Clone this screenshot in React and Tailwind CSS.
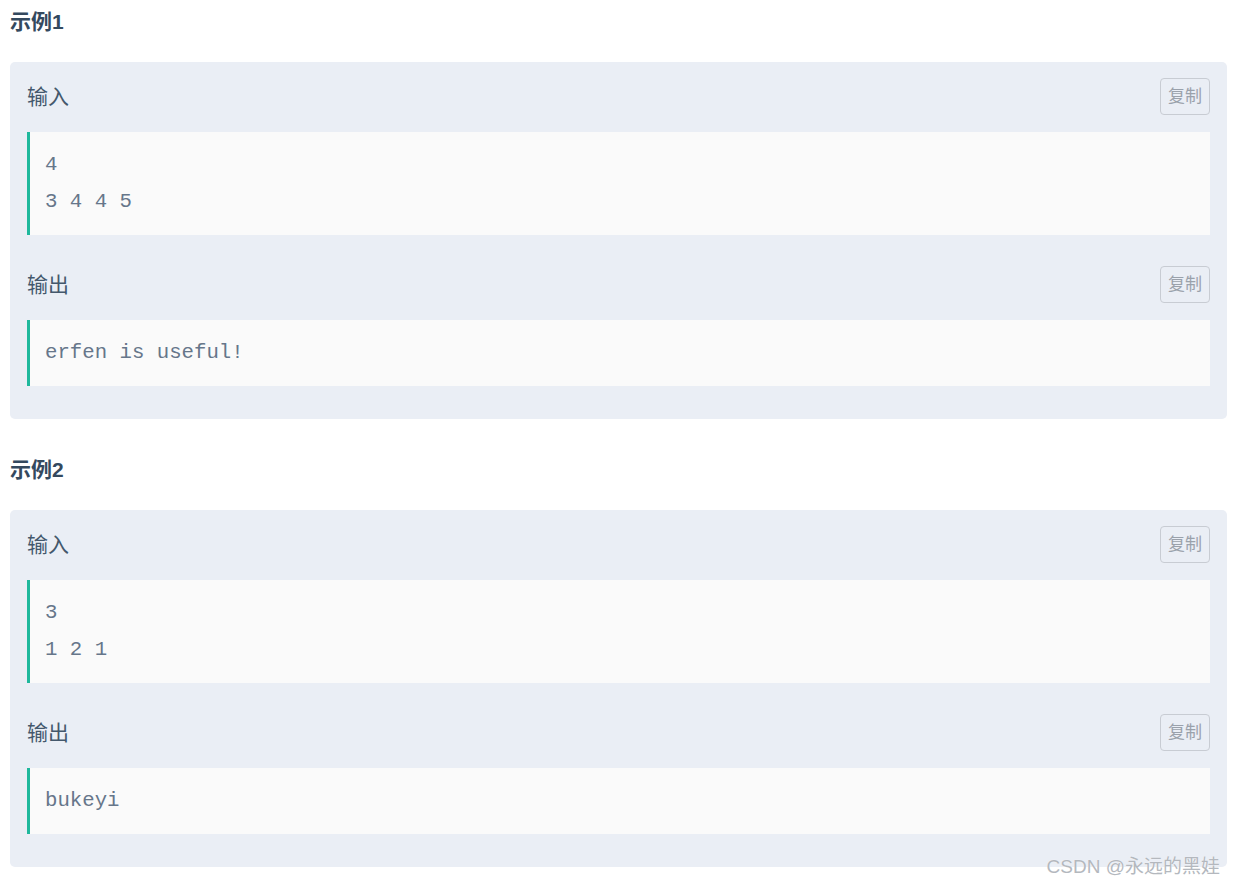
import React from 'react';

const samples = [
    { title: '示例1', input: ['4', '3 4 4 5'], output: ['erfen is useful!'] },
    { title: '示例2', input: ['3', '1 2 1'], output: ['bukeyi'] },
];

const IOBlock = ({ label, lines }) => (
    <div>
        <div className="flex items-center justify-between h-[37px]">
            <span className="text-[21px] text-[#44586c]">{label}</span>
            <button className="w-[50px] h-[37px] rounded-[4px] border border-[#c8ccd3] text-[17px] text-[#9aa1ab] bg-transparent">
                复制
            </button>
        </div>
        <div className="mt-[17px] border-l-[3px] border-[#1fb89c] bg-[#fafafa] pt-[14px] pb-[15px] pl-[15px]">
            {lines.map((line, i) => (
                <div
                    key={i}
                    className="h-[37px] leading-[37px] text-[20.7px] text-[#66768a] whitespace-pre"
                    style={{ fontFamily: '"Liberation Mono", monospace' }}
                >
                    {line}
                </div>
            ))}
        </div>
    </div>
);

export default function App() {
    return (
        <div
            className="bg-white min-h-[885px] pl-[10px] pr-[8px] pt-[8px] relative"
            style={{ fontFamily: '"Liberation Sans", "Noto Sans CJK SC", sans-serif' }}
        >
            {samples.map((s, i) => (
                <div key={i} className={i > 0 ? 'mt-[37px]' : ''}>
                    <h3 className="h-[28px] leading-[28px] text-[21px] font-bold text-[#34495e]">{s.title}</h3>
                    <div className="mt-[26px] bg-[#eaeef5] rounded-[5px] px-[17px] pt-[16px] pb-[33px]">
                        <IOBlock label="输入" lines={s.input} />
                        <div className="mt-[31px]">
                            <IOBlock label="输出" lines={s.output} />
                        </div>
                    </div>
                </div>
            ))}
            <div className="absolute right-[15px] top-[853px] text-[19px] text-[#b4b8be] [text-shadow:0_0_1px_#fff]">
                CSDN @永远的黑娃
            </div>
        </div>
    );
}
